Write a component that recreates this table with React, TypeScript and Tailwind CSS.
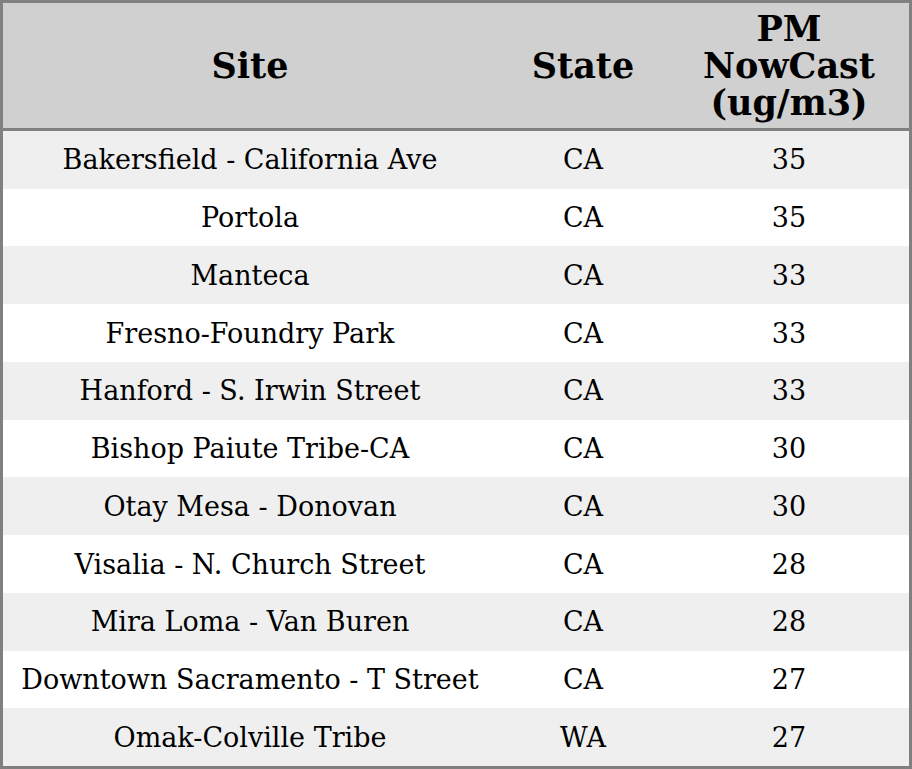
const rows: [string, string, number][] = [
  ["Bakersfield - California Ave", "CA", 35],
  ["Portola", "CA", 35],
  ["Manteca", "CA", 33],
  ["Fresno-Foundry Park", "CA", 33],
  ["Hanford - S. Irwin Street", "CA", 33],
  ["Bishop Paiute Tribe-CA", "CA", 30],
  ["Otay Mesa - Donovan", "CA", 30],
  ["Visalia - N. Church Street", "CA", 28],
  ["Mira Loma - Van Buren", "CA", 28],
  ["Downtown Sacramento - T Street", "CA", 27],
  ["Omak-Colville Tribe", "WA", 27],
];

export default function App() {
  return (
    <div className="w-[912px] h-[769px] bg-white font-['DejaVu_Serif',serif] text-black">
      <div className="h-full border-[3px] border-[#808080] flex flex-col">
        <div className="grid grid-cols-[494px_172px_1fr] h-[128px] bg-[#d0d0d0] border-b-[3px] border-[#808080] font-bold text-[35px] leading-[37px] items-center text-center">
          <div>Site</div>
          <div>State</div>
          <div>
            PM
            <br />
            NowCast
            <br />
            (ug/m3)
          </div>
        </div>
        <div className="flex-1 flex flex-col">
          {rows.map(([site, state, pm], i) => (
            <div
              key={site}
              className={`flex-1 grid grid-cols-[494px_172px_1fr] items-center text-center text-[27px] leading-none ${
                i % 2 === 0 ? "bg-[#efefef]" : "bg-white"
              }`}
            >
              <div>{site}</div>
              <div>{state}</div>
              <div>{pm}</div>
            </div>
          ))}
        </div>
      </div>
    </div>
  );
}
